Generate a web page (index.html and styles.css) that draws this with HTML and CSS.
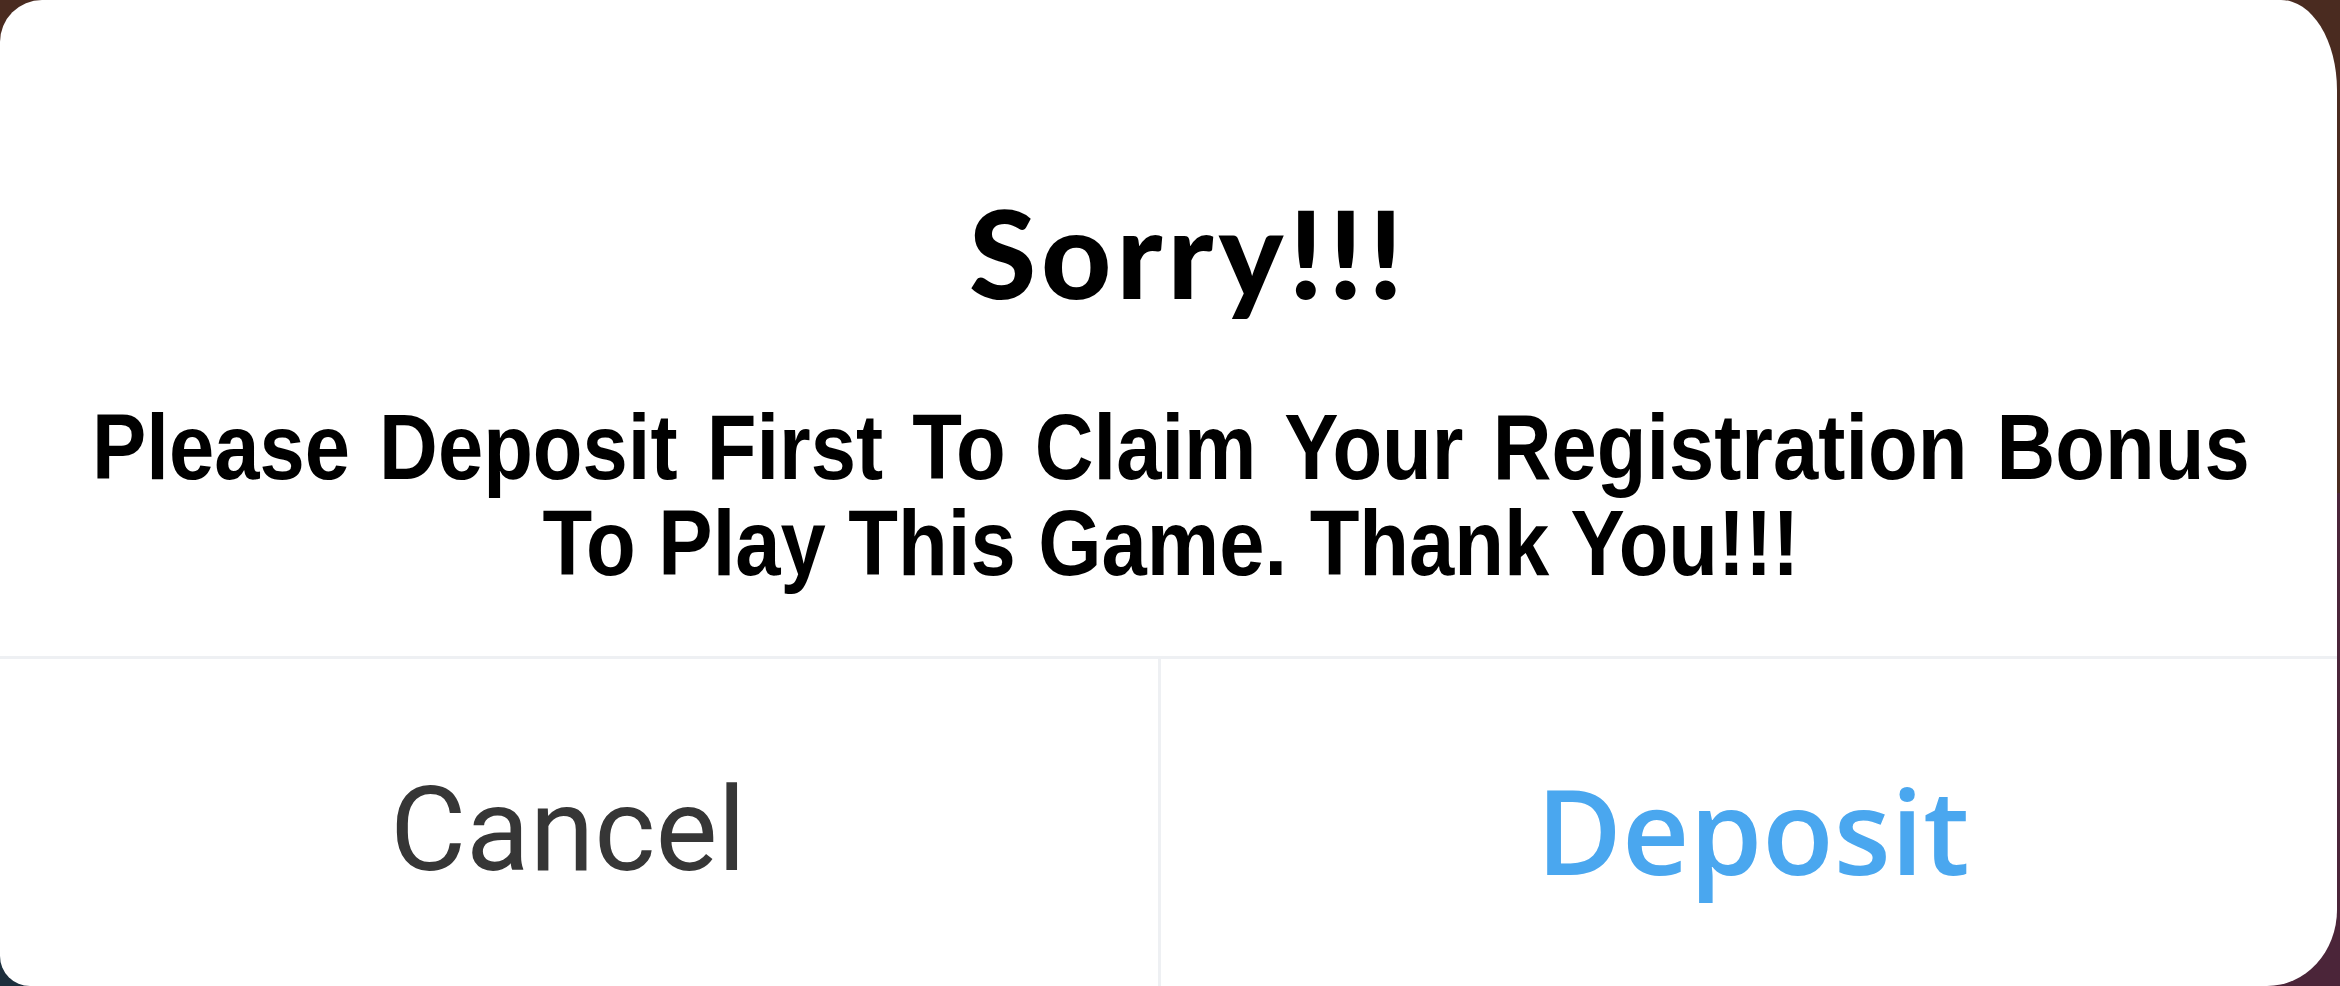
FILE: index.html
```html
<!DOCTYPE html>
<html lang="en">
<head>
<meta charset="utf-8">
<title>Sorry</title>
<link rel="stylesheet" href="styles.css">
</head>
<body>
<div class="dialog">
  <div class="message">
    <h1 class="title">Sorry!!!</h1>
    <p class="text"><span class="line line-full">Please Deposit First To Claim Your Registration Bonus</span><span class="line line-last">To Play This Game. Thank You!!!</span></p>
  </div>
  <div class="actions">
    <button class="btn btn-cancel">Cancel</button>
    <button class="btn btn-deposit">Deposit</button>
  </div>
</div>
</body>
</html>
```
FILE: styles.css
```css
html, body {
  margin: 0;
  padding: 0;
  width: 2340px;
  height: 986px;
  overflow: hidden;
}
body {
  background:
    linear-gradient(#4a2b20 0 50%, transparent 50%),
    linear-gradient(to right, #1d2f3d 50%, #4b2539 50%);
}
.dialog {
  width: 2337px;
  height: 986px;
  background: #ffffff;
  border-radius: 42px 56px 70px 30px / 42px 90px 76px 30px;
  display: flex;
  flex-direction: column;
  overflow: hidden;
}
.message {
  box-sizing: border-box;
  height: 659px;
  padding: 192px 0 0 92px;
  border-bottom: 3px solid #eef0f3;
}
.title {
  margin: 0 0 0 -92px;
  padding-left: 40px;
  font-family: "Lato", "Liberation Sans", sans-serif;
  font-weight: 900;
  font-size: 122px;
  line-height: 120px;
  letter-spacing: 5px;
  text-align: center;
  color: #000;
}
.text {
  width: 2466px;
  margin: 87px 0 0 0;
  font-family: "Liberation Sans", "Arial", sans-serif;
  font-weight: 700;
  font-size: 93px;
  line-height: 96px;
  color: #000;
  transform: scaleX(0.875);
  transform-origin: left top;
}
.line {
  display: block;
}
.line-full {
  text-align: justify;
  text-align-last: justify;
}
.line-last {
  text-align: center;
}
.actions {
  flex: 1;
  display: flex;
}
.btn {
  margin: 0;
  border: 0;
  background: transparent;
  display: flex;
  justify-content: center;
  align-items: flex-start;
  line-height: 1;
  cursor: pointer;
}
.btn-cancel {
  flex: none;
  width: 1161px;
  box-sizing: border-box;
  border-right: 3px solid #eef0f3;
  padding: 113px 22px 0 0;
  font-family: Roboto, "Liberation Sans", sans-serif;
  font-weight: 400;
  font-size: 117px;
  color: #363636;
}
.btn-deposit {
  flex: 1;
  padding: 112px 0 0 8px;
  font-family: "Open Sans", "Noto Sans", sans-serif;
  font-weight: 600;
  font-size: 117px;
  color: #4aa7ef;
}
```
